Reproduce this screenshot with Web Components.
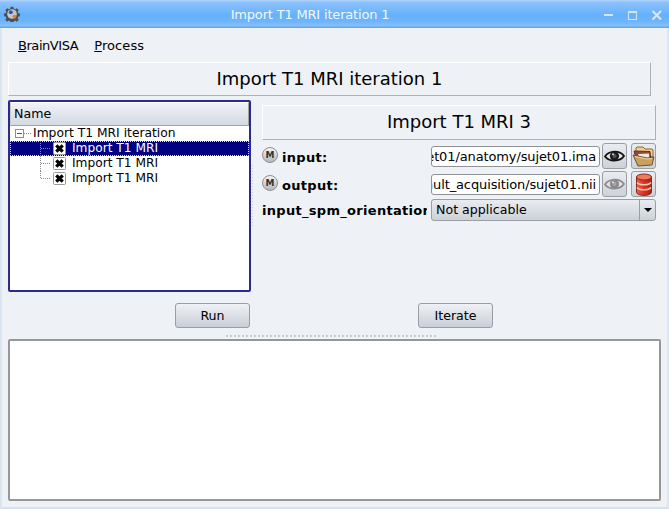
<!DOCTYPE html>
<html><head><meta charset="utf-8">
<style>
html,body{margin:0;padding:0;width:669px;height:509px;overflow:hidden;background:#eef1f6}
body{font:13px/15px "DejaVu Sans",sans-serif;color:#000}
</style></head><body>
<template id="t-window"><style>
:host{display:flex;flex-direction:column;width:669px;height:509px;box-sizing:border-box;background:#eef1f6;border-left:2px solid #dbe6f3;border-right:2px solid #dbe6f3;border-bottom:2px solid #d3e0f0}
.body{flex:1;display:flex;flex-direction:column;padding:0 6px 6px 6px;min-height:0}
</style><slot name="bar"></slot><div class="body"><slot></slot></div></template>

<template id="t-titlebar"><style>
:host{display:flex;align-items:center;height:28px;margin:0 -2px;box-sizing:border-box;background:linear-gradient(#a9cffb 0,#a9cffb 1px,#8fc2fb 2px,#64b1fd 15px,#6fb6fc 22px,#86c1fb 26px,#6aa5e0 27px);color:#f4f8fd;font-size:13px;letter-spacing:-.18px}
svg{display:block}
.ic{margin-left:4px;flex:none}
.t{flex:1;text-align:center;margin-left:-2px}
.b{display:flex;gap:11px;margin-right:6px;align-items:center}
</style>
<svg class="ic" width="16" height="16" viewBox="0 0 16 16"><path d="M6.500 0h3l.4 2 1.700.7 1.800-1.200 2.100 2.100-1.200 1.800.7 1.700 2 .4v3l-2 .4-.7 1.700 1.200 1.800-2.100 2.100-1.800-1.200-1.700.7-.4 2h-3l-.4-2-1.700-.7-1.800 1.200-2.100-2.100 1.200-1.800-.7-1.700-2-.4v-3l2-.4.7-1.700-1.200-1.800 2.100-2.100 1.800 1.200 1.700-.7z" fill="#4c4f54" transform="translate(.8 .8) scale(.9)"/><circle cx="8" cy="8" r="4.800" fill="#c4c8cf"/><circle cx="6.800" cy="6.300" r="2" fill="#2f55c0"/><circle cx="10.500" cy="10.600" r="1.900" fill="#ea7f22"/><circle cx="10" cy="5.800" r="1" fill="#d8c23a"/></svg>
<span class="t"><slot></slot></span>
<div class="b">
<svg width="13" height="13" viewBox="0 0 13 13"><path d="M2 6h9v2H2z" fill="#d8e3ef"/></svg>
<svg width="13" height="13" viewBox="0 0 13 13"><rect x="2.500" y="3.500" width="8" height="8" fill="none" stroke="#d8e3ef"/><rect x="2" y="3" width="9" height="2" fill="#d8e3ef"/></svg>
<svg width="13" height="13" viewBox="0 0 13 13"><path d="M2.500 3l8.500 8.500M11 3l-8.500 8.500" stroke="#dde7f1" stroke-width="2"/></svg>
</div></template>

<template id="t-menubar"><style>
:host{display:flex;gap:16px;height:34px;align-items:center;padding:0 0 0 10px;font-size:13px;box-sizing:border-box}
u{text-decoration:underline}
.a{letter-spacing:-.45px}.p{letter-spacing:.1px}
</style><span class="a"><u>B</u>rainVISA</span><span class="p"><u>P</u>rocess</span></template>

<template id="t-heading"><style>
:host{display:flex;align-items:center;justify-content:center;box-sizing:border-box;border:1px solid;border-color:#fff #aeb1b5 #aeb1b5 #fff;font-size:18px;height:var(--h,34px);margin-right:var(--mr,0);padding-bottom:var(--pb,1px)}
</style><slot></slot></template>

<template id="t-tree"><style>
:host{display:flex;flex-direction:column;box-sizing:border-box;width:243px;height:192px;background:#fff;border:2px solid #2b2b8e;border-radius:2px;overflow:hidden}
.hd{height:24px;box-sizing:border-box;padding:3px 0 0 3px;background:linear-gradient(#f0f3f8,#d3dae2);border:1px solid #9ea3a9;border-top-color:#fff;border-left-color:#c9ccd0;line-height:15px;flex:none;font-size:12.600px}
</style><div class="hd"><slot name="head"></slot></div><slot></slot></template>

<template id="t-row"><style>
:host{display:flex;align-items:center;height:15px;font-size:12.200px;box-sizing:border-box;white-space:nowrap}
:host([sel]){background:#000080;color:#fff;outline:1px dotted #f4e66b;outline-offset:-1px}
.g{width:43px;flex:none;height:15px;position:relative}
.chk{display:block;flex:none;margin-right:6px}
.g svg{position:absolute;left:0;top:0}
</style><span class="g"><svg width="43" height="15" viewBox="0 0 43 15"><path id="lines" fill="none" stroke="#8a8a8a" stroke-dasharray="1 1" shape-rendering="crispEdges"/></svg></span>
<svg class="chk" width="13" height="13" viewBox="0 0 13 13"><rect x=".5" y=".5" width="12" height="12" rx="1" fill="#fff" stroke="#9a9a9a"/><path d="M3.300 3.300l6.400 6.400M9.700 3.300l-6.400 6.400" stroke="#000" stroke-width="3.300"/></svg>
<slot></slot></template>

<template id="t-root"><style>
:host{display:flex;align-items:center;height:15px;font-size:12.300px;white-space:nowrap}
svg{display:block;flex:none}
</style><svg width="23" height="15" viewBox="0 0 23 15"><rect x="5.500" y="3.500" width="8" height="8" rx="1" fill="#fff" stroke="#8e8e8e" shape-rendering="crispEdges"/><path d="M7 7.500h5" stroke="#555" shape-rendering="crispEdges"/><path d="M14 7.500h7" stroke="#8a8a8a" stroke-dasharray="1 1" shape-rendering="crispEdges"/></svg><slot></slot></template>

<template id="t-field"><style>
:host{display:grid;grid-template-columns:169px 1fr 27px 29px;align-items:center;height:26px;margin-bottom:2px}
.l{display:flex;align-items:center;gap:4px;font-weight:bold;font-size:13px;letter-spacing:.3px;white-space:nowrap}
.m{width:16px;height:16px;border-radius:50%;box-sizing:border-box;border:1px solid #8d8f93;background:linear-gradient(#f4f4f4,#b5b7ba);font:bold 9px/14px "DejaVu Sans",sans-serif;letter-spacing:0;color:#333;text-align:center;flex:none;margin-top:-2px}
.in{box-sizing:border-box;height:21px;border:1px solid #8f9296;border-radius:3px;background:#fff;overflow:hidden;white-space:nowrap;display:flex;justify-content:flex-end;line-height:19px;padding:0 3px 0 0;font-size:13px;letter-spacing:-.12px}
.in span{flex:none}
.cl{box-sizing:border-box;width:100%;height:100%;overflow:hidden;display:flex;justify-content:flex-end}
.b{box-sizing:border-box;width:25px;height:26px;border:1px solid #9a9ea3;border-radius:3px;background:linear-gradient(#e9ecf1,#ccd2d9);display:flex;align-items:center;justify-content:center;justify-self:end}
</style><div class="l"><span class="m">M</span><span style="margin-top:2px"><slot name="label"></slot></span></div><div class="in"><div class="cl"><span><slot name="value"></slot></span></div></div><div class="b"><slot name="a"></slot></div><div class="b"><slot name="b"></slot></div></template>

<template id="t-combo"><style>
:host{display:grid;grid-template-columns:169px 1fr;align-items:center;height:22px}
.l{font-weight:bold;font-size:13px;letter-spacing:.3px;white-space:nowrap;overflow:hidden;width:165px}
.c{display:flex;box-sizing:border-box;height:22px;border:1px solid #9a9ea3;border-radius:3px;background:linear-gradient(#e9ecf1,#ccd2d9);line-height:20px;font-size:12.600px;padding-left:4px;align-items:stretch}
.t{flex:1}
.a{width:15px;border-left:1px solid #9a9ea3;display:flex;align-items:center;justify-content:center}
i{display:block;width:0;height:0;border:4px solid transparent;border-top:4px solid #000;border-bottom:0}
</style><div class="l"><slot name="label"></slot></div><div class="c"><span class="t"><slot></slot></span><span class="a"><i></i></span></div></template>

<template id="t-button"><style>
:host{display:block;box-sizing:border-box;width:75px;height:25px;border:1px solid #9a9ea3;border-radius:3px;background:linear-gradient(#eef1f5,#c9cfd7);text-align:center;line-height:23px;font-size:12.600px}
</style><slot></slot></template>

<template id="t-log"><style>
:host{display:block;box-sizing:border-box;flex:1;background:#fff;border:2px solid #95979b;border-radius:2px}
</style><slot></slot></template>

<template id="t-split"><style>
:host{display:grid;grid-template-columns:243px 11px 1fr;height:192px}
.r{display:flex;flex-direction:column;padding:5px 5px 0 0;min-width:0}
.gw{display:flex;align-items:center}
.grip{width:3px;height:64px;background-image:radial-gradient(#c8c8c8 .8px,transparent .9px);background-size:3px 3px}
</style><div><slot name="left"></slot></div><div class="gw"><div class="grip"></div></div><div class="r"><slot></slot></div></template>

<template id="t-actions"><style>
:host{display:grid;grid-template-columns:242px 1fr;height:47px;flex:none;align-items:start;align-content:start;padding-top:11px;box-sizing:border-box}
.a{display:flex;justify-content:flex-end}
.b{display:flex;justify-content:center}
.grip{grid-column:1/3;height:2px;margin:7px 0 0 218px;width:212px;background-image:linear-gradient(90deg,#c9c9c9 2px,transparent 2px);background-size:4px 2px;background-repeat:repeat-x}
</style><div class="a"><slot name="a"></slot></div><div class="b"><slot name="b"></slot></div><div class="grip"></div></template>

<win-dow>
<title-bar slot="bar">Import T1 MRI iteration 1</title-bar>
<menu-bar></menu-bar>
<head-ing style="--mr:10px">Import T1 MRI iteration 1</head-ing>
<div style="height:4px;flex:none"></div>
<main-split>
<tree-view slot="left"><span slot="head">Name</span>
<tree-root>Import T1 MRI iteration</tree-root>
<tree-row sel>Import T1 MRI</tree-row>
<tree-row>Import T1 MRI</tree-row>
<tree-row last>Import T1 MRI</tree-row>
</tree-view>
<head-ing style="--h:35px;--pb:3px;flex:none">Import T1 MRI 3</head-ing>
<div style="height:3px;flex:none"></div>
<form-field>
<span slot="label">input:</span><span slot="value">sujet01/anatomy/sujet01.ima</span>
<svg slot="a" width="21" height="14" viewBox="0 0 21 14"><path d="M1 7.500C5 1 16 1 20 7c-4 6-15 6-19 .5z" fill="#dfe3e8" stroke="#111" stroke-width="1.800"/><circle cx="10.500" cy="7" r="4.600" fill="#1c1c1c"/><circle cx="10.500" cy="7" r="2" fill="#555"/><circle cx="9" cy="5.300" r="1" fill="#ddd"/></svg>
<svg slot="b" width="23" height="23" viewBox="0 0 23 23"><path d="M4 9V3l1-1h6l2 2h7l1 1v7z" fill="#efd088" stroke="#8a6a30"/><path d="M2 6l16 .500 1 12-13 1.500z" fill="#8f4a3a" stroke="#5e3024"/><path d="M6 9l11-.500.500 6-9 1z" fill="#f0e6dc"/><path d="M1 10l14 3 7-1-2 8-14 1z" fill="#c9a060" stroke="#6e5228"/><path d="M3 11.500l12 2.500 5-.500" fill="none" stroke="#ecd9a8"/></svg>
</form-field>
<form-field>
<span slot="label">output:</span><span slot="value">default_acquisition/sujet01.nii</span>
<svg slot="a" width="21" height="14" viewBox="0 0 21 14"><path d="M1 7.500C5 1 16 1 20 7c-4 6-15 6-19 .5z" fill="#dfe3e8" stroke="#8c8c8c" stroke-width="1.800"/><circle cx="10.500" cy="7" r="4.600" fill="#8a8a8a"/><circle cx="10.500" cy="7" r="2" fill="#a8a8a8"/><circle cx="9" cy="5.300" r="1" fill="#e4e4e4"/></svg>
<svg slot="b" width="18" height="23" viewBox="0 0 18 23"><defs><linearGradient id="db" x1="0" x2="1" y1="0" y2="0"><stop offset="0" stop-color="#e8604a"/><stop offset=".5" stop-color="#d8321e"/><stop offset="1" stop-color="#a82414"/></linearGradient></defs><path d="M1.500 4v15c0 4.500 15 4.500 15 0V4z" fill="url(#db)" stroke="#8a2a1a"/><ellipse cx="9" cy="4" rx="7.500" ry="3" fill="#f07a60" stroke="#8a2a1a"/><path d="M2 9.500c2 3 12 3 14 0M2 14.500c2 3 12 3 14 0" fill="none" stroke="#f8c4b4" stroke-width="1.400"/></svg>
</form-field>
<combo-field><span slot="label">input_spm_orientation</span>Not applicable</combo-field>
</main-split>
<act-ions><push-button slot="a">Run</push-button><push-button slot="b">Iterate</push-button></act-ions>
<log-view></log-view>
</win-dow>
<script>
function def(name,tpl,init){customElements.define(name,class extends HTMLElement{constructor(){super();const r=this.attachShadow({mode:'open'});r.appendChild(document.getElementById(tpl).content.cloneNode(true));}connectedCallback(){if(init)init(this);}});}
def('win-dow','t-window');def('title-bar','t-titlebar');def('menu-bar','t-menubar');def('head-ing','t-heading');
def('main-split','t-split');def('tree-view','t-tree');def('tree-root','t-root');
def('tree-row','t-row',el=>{const p=el.shadowRoot.getElementById('lines');const x=30.5;p.setAttribute('d',el.hasAttribute('last')?'M'+x+' 0V7.500H41':'M'+x+' 0V15M'+x+' 7.500H41');});
def('form-field','t-field');def('combo-field','t-combo');def('push-button','t-button');def('act-ions','t-actions');def('log-view','t-log');
</script>
</body></html>
